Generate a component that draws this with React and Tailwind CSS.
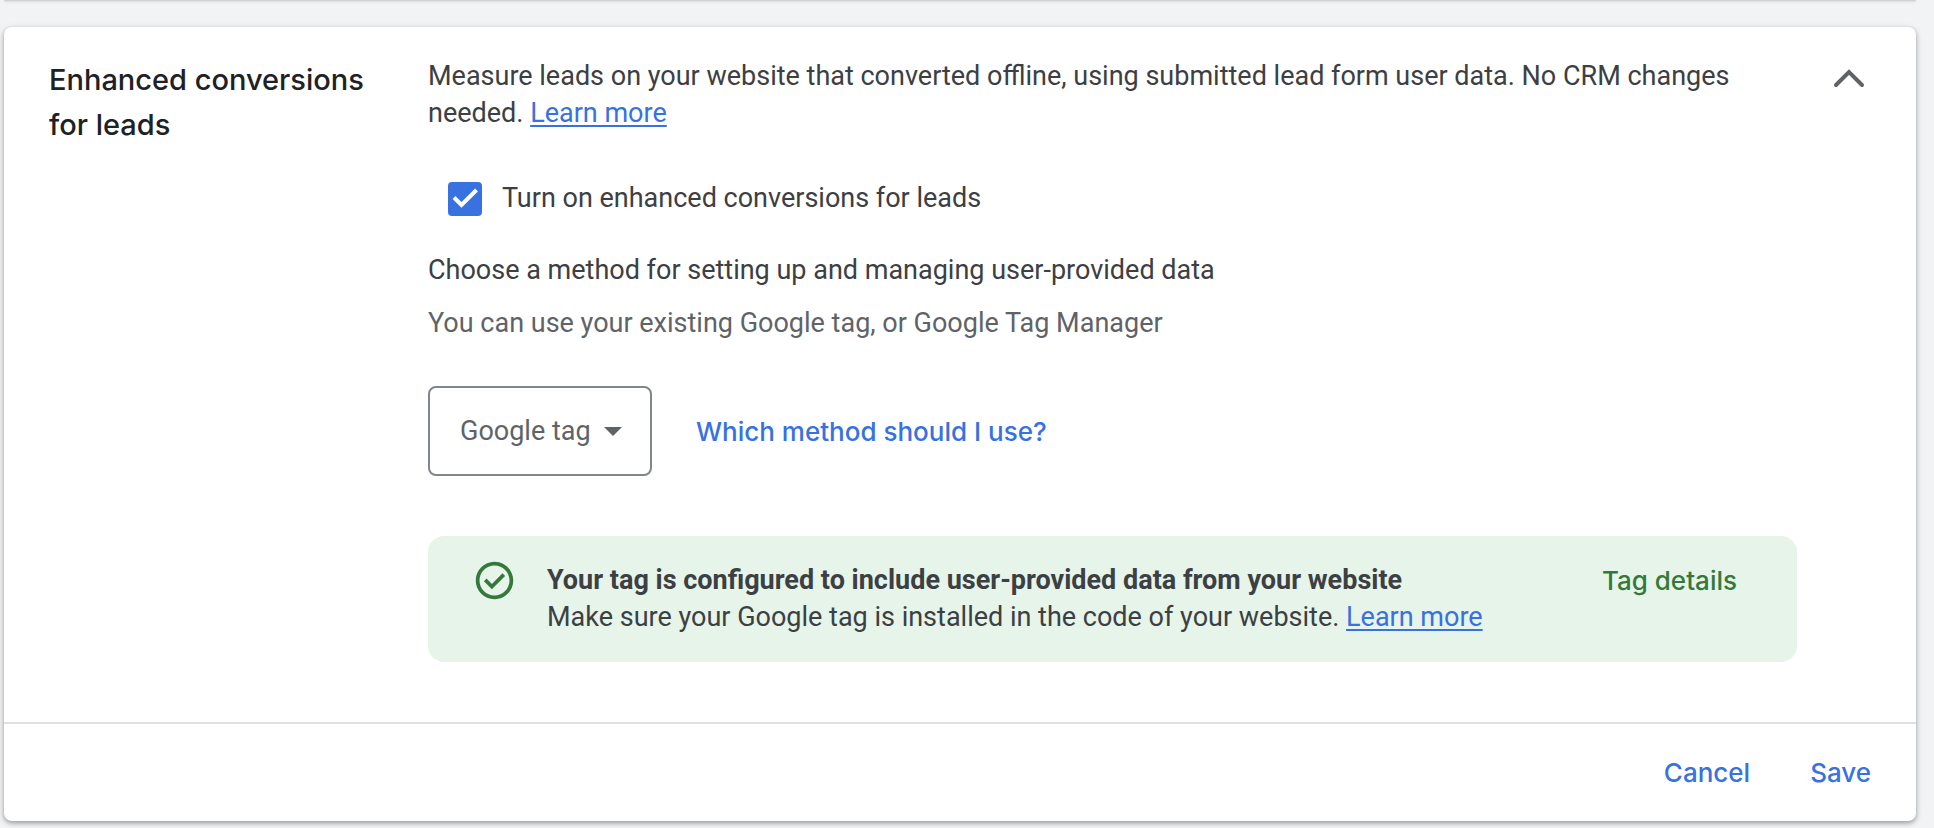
import React, { useState } from 'react';

const CheckCircle = () => (
  <svg viewBox="0 0 24 24" className="w-[45px] h-[45px] shrink-0 fill-[#34793b]" aria-hidden="true">
    <path d="M10.6 16.6l7.05-7.05-1.4-1.4-5.65 5.65-2.85-2.85-1.4 1.4zM12 2C6.48 2 2 6.48 2 12s4.48 10 10 10 10-4.48 10-10S17.52 2 12 2zm0 18c-4.42 0-8-3.58-8-8s3.58-8 8-8 8 3.58 8 8-3.58 8-8 8z" />
  </svg>
);

const App = () => {
  const [enabled, setEnabled] = useState(true);
  const [method, setMethod] = useState('Google tag');
  const [isOpen, setIsOpen] = useState(true);

  return (
    <div className="min-h-screen bg-[#f1f3f4] pl-1 pr-[18px] font-[Roboto,sans-serif] text-[27px] leading-[37px] text-[#3c4043]">
      {/* Bottom edge of the previous card */}
      <div className="h-px rounded-b-lg bg-[#cfd1d3] shadow-[0_1px_2px_rgba(60,64,67,0.2)]" />

      <section className="mt-[26px] rounded-lg bg-white shadow-[0_2px_4px_rgba(60,64,67,0.4),0_2px_6px_1px_rgba(60,64,67,0.12)]">
        <div className="flex items-start pt-[30px] pb-[60px] pl-[45px] pr-[43px]">
          <h2 className="w-[379px] shrink-0 font-[Inter,sans-serif] text-[29px] leading-[45px] font-medium text-[#202124]">
            Enhanced conversions
            <br />
            for leads
          </h2>

          <div className="flex-1 min-w-0 pt-px">
            <p className="pr-14">
              Measure leads on your website that converted offline, using submitted lead form user data. No CRM changes
              needed.{' '}
              <a href="#learn" className="text-[#3871e0] underline underline-offset-3">Learn more</a>
            </p>

            <label className="mt-12 ml-5 flex w-fit items-center gap-5">
              <span className="relative flex">
                <input
                  type="checkbox"
                  checked={enabled}
                  onChange={(e) => setEnabled(e.target.checked)}
                  className="w-[34px] h-[34px] appearance-none rounded-[4px] border-4 border-[#5f6368] checked:border-[#3871e0] checked:bg-[#3871e0]"
                />
                {enabled && (
                  <svg viewBox="0 0 34 34" className="absolute inset-0 pointer-events-none" fill="none" stroke="#fff" strokeWidth="4">
                    <path d="M6 15.500 13.500 23 28.500 8" />
                  </svg>
                )}
              </span>
              Turn on enhanced conversions for leads
            </label>

            <p className="mt-[35px]">Choose a method for setting up and managing user-provided data</p>
            <p className="mt-4 text-[#5f6368]">You can use your existing Google tag, or Google Tag Manager</p>

            <div className="mt-11 flex items-center gap-11">
              <div className="relative">
                <select
                  value={method}
                  onChange={(e) => setMethod(e.target.value)}
                  aria-label="Setup method"
                  className="h-[90px] w-[224px] appearance-none rounded-lg border-2 border-[#80868b] bg-white pl-[30px] text-[#5f6368]"
                >
                  <option>Google tag</option>
                </select>
                <svg viewBox="0 0 18 9" className="absolute right-[30px] top-[41px] w-[18px] h-[9px] fill-[#5f6368] pointer-events-none" aria-hidden="true">
                  <path d="M0 0h18L9 9z" />
                </svg>
              </div>
              <a href="#method" className="font-[Inter,sans-serif] text-[26px] font-medium text-[#3871e0]">Which method should I use?</a>
            </div>

            <div className="mt-[60px] mr-7 flex items-start rounded-2xl bg-[#e6f4ea] pt-[22px] pb-[26px] pl-11 pr-[60px]">
              <CheckCircle />
              <div className="ml-[30px] flex-1 pt-1">
                <p className="font-bold">Your tag is configured to include user-provided data from your website</p>
                <p>
                  Make sure your Google tag is installed in the code of your website.{' '}
                  <a href="#install" className="text-[#3871e0] underline underline-offset-3">Learn more</a>
                </p>
              </div>
              <button type="button" className="pt-1 font-[Inter,sans-serif] text-[26px] font-medium text-[#34793b]">Tag details</button>
            </div>
          </div>

          <button type="button" onClick={() => setIsOpen(!isOpen)} aria-label="Collapse section" aria-expanded={isOpen} className="shrink-0 mt-1">
            <svg viewBox="0 0 48 36" className="w-12 h-9" fill="none" stroke="#5f6368" strokeWidth="4" strokeLinecap="round">
              <path d="M11 24 24 11 37 24" />
            </svg>
          </button>
        </div>

        <div className="flex justify-end gap-[60px] border-t-2 border-[#e0e0e0] py-[30px] pr-[45px] font-[Inter,sans-serif] text-[26px] font-medium text-[#3871e0]">
          <button type="button">Cancel</button>
          <button type="button">Save</button>
        </div>
      </section>
    </div>
  );
};

export default App;
